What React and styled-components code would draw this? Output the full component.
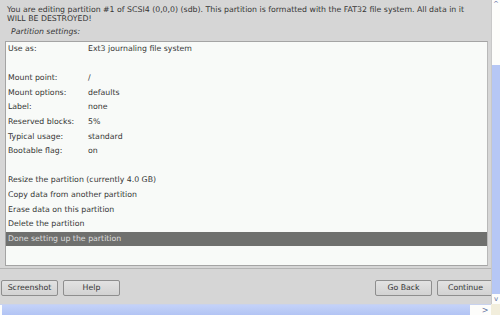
import React from "react";
import styled, { createGlobalStyle } from "styled-components";

const Global = createGlobalStyle`
  html, body {
    margin: 0;
    padding: 0;
    width: 500px;
    height: 315px;
    overflow: hidden;
    background: #d6d6d6;
  }
  * { box-sizing: border-box; }
`;

const Frame = styled.div`
  width: 500px;
  height: 315px;
  display: grid;
  grid-template-columns: 491px 9px;
  grid-template-rows: 304px 11px;
  font-family: "DejaVu Sans", sans-serif;
  font-size: 7.8px;
  color: #363636;
`;

const Dialog = styled.div`
  background: #d6d6d6;
  display: flex;
  flex-direction: column;
  overflow: hidden;
`;

const Intro = styled.p`
  margin: 0;
  padding: 4.5px 0 0 7px;
  height: 23.6px;
  line-height: 9.3px;
  white-space: nowrap;
  & > span { display: block; }
`;

const Caption = styled.div`
  padding: 3px 0 0 11px;
  height: 17.4px;
  line-height: 10px;
  font-style: italic;
`;

const ListBox = styled.div`
  margin: 0 3px 0 5px;
  height: 225px;
  flex: none;
  background: #f8faf8;
  border: 1px solid #a4a4a4;
  border-right-color: #b8b8b8;
`;

const Row = styled.div`
  height: 14.6px;
  line-height: 14.6px;
  padding-left: 2px;
  display: flex;
  white-space: nowrap;
  background: ${(p) => (p.$active ? "#6f706e" : "transparent")};
  color: ${(p) => (p.$active ? "#dedede" : "#363636")};
`;

const Label = styled.span`
  width: 80px;
`;

const Separator = styled.div`
  margin: 2px 0 0 0;
  height: 1px;
  flex: none;
  background: #b4b4b4;
`;

const ButtonBar = styled.div`
  display: flex;
  align-items: center;
  padding: 11px 0 0 1px;
  gap: 5px;
`;

const Spacer = styled.div`
  flex: 1;
`;

const Button = styled.button`
  width: 57px;
  height: 16px;
  padding: 0;
  font-family: "DejaVu Sans", sans-serif;
  font-size: 7.8px;
  color: #363636;
  background: linear-gradient(#e2e2e2, #d2d2d2);
  border: 1px solid #8e8e8e;
  border-radius: 2px;
  margin-right: ${(p) => (p.$last ? "-3px" : "0")};
`;

const VScroll = styled.div`
  background: #fdfdfb;
  border-left: 1px solid #c8c8c8;
  display: flex;
  flex-direction: column;
  align-items: center;
  font-size: 7px;
  color: #6070a0;
`;

const Arrow = styled.div`
  height: ${(p) => p.$h || 8}px;
  line-height: ${(p) => p.$h || 8}px;
  text-align: center;
  width: ${(p) => (p.$w ? `${p.$w}px` : "100%")};
`;

const Track = styled.div`
  flex: ${(p) => (p.$fill ? 1 : "none")};
  height: ${(p) => p.$h || 0}px;
  width: 100%;
  background: ${(p) => (p.$thumb ? "#b6c7f5" : "transparent")};
`;

const HScroll = styled.div`
  background: #fdfdfb;
  border-top: 1px solid #c8d2ee;
  display: flex;
  align-items: center;
  font-size: 8px;
  color: #6070a0;
`;

const HThumb = styled.div`
  width: 468px;
  height: 100%;
  margin-left: 2px;
  background: linear-gradient(#c4d2f8, #b2c4f4);
`;

const Corner = styled.div`
  background: #f2eedc;
`;

const settings = [
  ["Mount point:", "/"],
  ["Mount options:", "defaults"],
  ["Label:", "none"],
  ["Reserved blocks:", "5%"],
  ["Typical usage:", "standard"],
  ["Bootable flag:", "on"],
];

const actions = [
  "Resize the partition (currently 4.0 GB)",
  "Copy data from another partition",
  "Erase data on this partition",
  "Delete the partition",
];

export default function App() {
  return (
    <>
      <Global />
      <Frame>
        <Dialog>
          <Intro>
            <span>
              You are editing partition #1 of SCSI4 (0,0,0) (sdb). This partition is formatted with the FAT32 file system. All data in it
            </span>
            <span>WILL BE DESTROYED!</span>
          </Intro>
          <Caption>Partition settings:</Caption>
          <ListBox>
            <Row>
              <Label>Use as:</Label>
              <span>Ext3 journaling file system</span>
            </Row>
            <Row />
            {settings.map(([k, v]) => (
              <Row key={k}>
                <Label>{k}</Label>
                <span>{v}</span>
              </Row>
            ))}
            <Row />
            {actions.map((a) => (
              <Row key={a}>{a}</Row>
            ))}
            <Row $active>Done setting up the partition</Row>
          </ListBox>
          <Separator />
          <ButtonBar>
            <Button>Screenshot</Button>
            <Button>Help</Button>
            <Spacer />
            <Button>Go Back</Button>
            <Button $last>Continue</Button>
          </ButtonBar>
        </Dialog>
        <VScroll>
          <Arrow $h={8}>^</Arrow>
          <Track $h={57} />
          <Track $fill $thumb />
          <Arrow $h={10}>v</Arrow>
        </VScroll>
        <HScroll>
          <HThumb />
          <Spacer />
          <Arrow $h={11} $w={12}>&gt;</Arrow>
        </HScroll>
        <Corner />
      </Frame>
    </>
  );
}
